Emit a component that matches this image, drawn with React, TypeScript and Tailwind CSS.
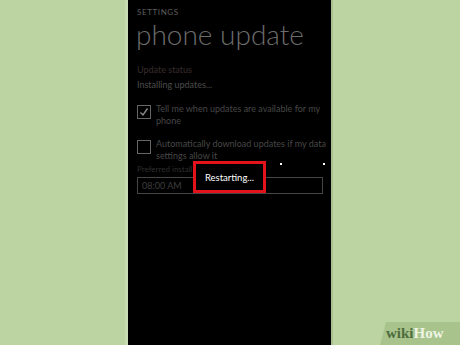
import React from 'react';

const Check: React.FC<{ checked?: boolean }> = ({ checked }) => (
  <div className="w-[14px] h-[14px] border border-[#666] shrink-0 flex items-center justify-center mt-[2px]">
    {checked && (
      <svg width="10" height="10" viewBox="0 0 10 10" fill="none">
        <path d="M1.5 5.5 L4 8 L8.5 1.5" stroke="#8a8a8a" strokeWidth="1.4" />
      </svg>
    )}
  </div>
);

const App: React.FC = () => {
  return (
    <div className="relative w-[460px] h-[345px] overflow-hidden bg-[#bcd3a2] flex" style={{ fontFamily: 'Lato, "Open Sans", sans-serif' }}>
      <div className="w-[125px] shrink-0" />
      <div className="w-[3px] shrink-0 bg-[#c9dcb3]" />

      {/* phone screen */}
      <div className="relative w-[203px] shrink-0 bg-black pl-[9px] pr-[8px] pt-[6px]">
        <div className="text-[8px] leading-[12px] tracking-[0.6px] text-[#5e5e5e]">SETTINGS</div>
        <div className="mt-[1px] whitespace-nowrap text-[28px] leading-[30px] font-light text-[#6c6c6c] -ml-[1px]">phone update</div>

        <div className="mt-[15px] text-[9px] leading-[12px] text-[#3a2c2c]">Update status</div>
        <div className="mt-[3px] text-[9px] leading-[12px] text-[#4c4c4c]">Installing updates...</div>

        <div className="mt-[12px] flex gap-[5px]">
          <Check checked />
          <div className="whitespace-nowrap text-[9px] leading-[12px] text-[#474747]">Tell me when updates are available for my<br />phone</div>
        </div>
        <div className="mt-[11px] flex gap-[5px]">
          <Check />
          <div className="whitespace-nowrap text-[9px] leading-[12px] text-[#474747]">Automatically download updates if my data<br />settings allow it</div>
        </div>

        <div className="mt-[2px] text-[8px] leading-[11px] text-[#2e2e2e]">Preferred install time</div>
        <div className="mt-[2px] h-[17px] border border-[#454545] px-[4px] flex items-center text-[9px] text-[#3e3e3e]">08:00 AM</div>

        {/* loading dots */}
        <div className="absolute left-[115px] top-[163px] w-[2px] h-[2px] bg-white" />
        <div className="absolute left-[129px] top-[163px] w-[2px] h-[2px] bg-white" />
        <div className="absolute left-[152px] top-[163px] w-[2px] h-[2px] bg-white" />
        <div className="absolute left-[195px] top-[163px] w-[2px] h-[2px] bg-white" />

        {/* restarting popup */}
        <div className="absolute left-[65px] top-[161px] w-[73px] h-[32px] bg-black border-[3px] border-[#e3131b] flex items-start justify-center pt-[8px]">
          <span className="text-[9.5px] leading-[11px] text-white">Restarting...</span>
        </div>
      </div>

      <div className="w-[2px] shrink-0 bg-[#a9c190]" />
      <div className="flex-1" />

      {/* wikiHow badge */}
      <div className="absolute right-0 bottom-0 w-[80px] h-[23px] bg-[#a8c48c] [clip-path:polygon(6px_0,100%_0,100%_100%,0_100%)] flex items-center pl-[6px]">
        <span className="text-[15px] leading-none font-bold text-[#4d6b3d]" style={{ fontFamily: '"Liberation Serif", serif' }}>wiki</span>
        <span className="text-[15px] leading-none font-bold text-[#eef4e4]" style={{ fontFamily: '"Liberation Serif", serif' }}>How</span>
      </div>
    </div>
  );
};

export default App;
